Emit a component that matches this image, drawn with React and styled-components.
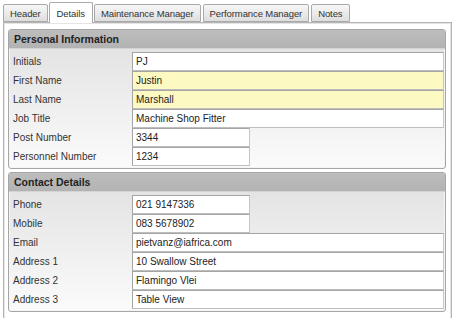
import styled, { createGlobalStyle } from "styled-components";

const GlobalStyle = createGlobalStyle`
  html, body {
    margin: 0;
    padding: 0;
    background: #ffffff;
  }
  body {
    font-family: "Liberation Sans", Arial, sans-serif;
    font-size: 10px;
    color: #222;
  }
`;

const TABS = ["Header", "Details", "Maintenance Manager", "Performance Manager", "Notes"];

const personal = [
  { label: "Initials", value: "PJ" },
  { label: "First Name", value: "Justin", required: true },
  { label: "Last Name", value: "Marshall", required: true },
  { label: "Job Title", value: "Machine Shop Fitter" },
  { label: "Post Number", value: "3344", short: true },
  { label: "Personnel Number", value: "1234", short: true },
];

const contact = [
  { label: "Phone", value: "021 9147336", short: true },
  { label: "Mobile", value: "083 5678902", short: true },
  { label: "Email", value: "pietvanz@iafrica.com" },
  { label: "Address 1", value: "10 Swallow Street" },
  { label: "Address 2", value: "Flamingo Vlei" },
  { label: "Address 3", value: "Table View" },
];

const Section = ({ title, rows }) => (
  <Group>
    <GroupHeader>{title}</GroupHeader>
    <GroupBody>
      {rows.map((r) => (
        <Row key={r.label}>
          <Label>{r.label}</Label>
          <Field $required={r.required} $short={r.short}>
            {r.value}
          </Field>
        </Row>
      ))}
    </GroupBody>
  </Group>
);

export default function App() {
  return (
    <>
      <GlobalStyle />
      <Screen>
        <TabBar>
          {TABS.map((t) => (
            <Tab key={t} $active={t === "Details"}>
              {t}
            </Tab>
          ))}
        </TabBar>
        <Panel>
          <Section title="Personal Information" rows={personal} />
          <Section title="Contact Details" rows={contact} />
        </Panel>
      </Screen>
    </>
  );
}

const Screen = styled.div`
  width: 454px;
  height: 318px;
  overflow: hidden;
  padding: 2px 0 0 3px;
  box-sizing: border-box;
`;

const TabBar = styled.div`
  display: flex;
  align-items: flex-end;
  gap: 2px;
  height: 20px;
  position: relative;
  z-index: 1;
`;

const Tab = styled.div`
  box-sizing: border-box;
  height: ${(p) => (p.$active ? "21px" : "18px")};
  padding: 0 ${(p) => (p.$active ? "7px" : "6px")};
  margin: ${(p) => (p.$active ? "0 -1px -1px" : "0")};
  display: flex;
  align-items: center;
  border: 1px solid #a9a9a9;
  border-bottom: ${(p) => (p.$active ? "none" : "1px solid #a9a9a9")};
  border-radius: 2px 2px 0 0;
  background: ${(p) =>
    p.$active ? "#ffffff" : "linear-gradient(to bottom, #f7f7f7, #dedede)"};
  color: #333;
  font-size: 9.5px;
  letter-spacing: -0.1px;
  white-space: nowrap;
`;

const Panel = styled.div`
  box-sizing: border-box;
  width: 449px;
  height: 300px;
  border: 1px solid #b5b5b5;
  box-shadow: inset 0 0 0 1px #e4e4e4, 2px 0 0 #ffffff, 3px 0 0 #c4c4c4;
  background: #ffffff;
  padding: 6px 5px 4px 4px;
  display: flex;
  flex-direction: column;
  gap: 3px;
`;

const Group = styled.div`
  border: 1px solid #a6a6a6;
  border-radius: 3px;
  background: linear-gradient(to bottom, #e0e0e0, #fbfbfb);
  box-shadow: inset 0 0 0 1px #f4f4f4;
  overflow: hidden;
`;

const GroupHeader = styled.div`
  height: 18px;
  line-height: 18px;
  padding-left: 5px;
  background: linear-gradient(to bottom, #bdbdbd, #b3b3b3);
  border-bottom: 1px solid #d4d4d4;
  font-weight: bold;
  font-size: 10.5px;
  color: #222;
`;

const GroupBody = styled.div`
  padding: 3px 1px 2px 4px;
`;

const Row = styled.div`
  display: grid;
  grid-template-columns: 119px 1fr;
  align-items: center;
  height: 19px;
`;

const Label = styled.div`
  color: #333;
  white-space: nowrap;
`;

const Field = styled.div`
  box-sizing: border-box;
  height: 19px;
  width: ${(p) => (p.$short ? "118px" : "100%")};
  line-height: 17px;
  padding-left: 3px;
  border: 1px solid #a5a5a5;
  border-right-color: #c6c6c6;
  border-bottom-color: #bdbdbd;
  background: ${(p) => (p.$required ? "#fdf9c3" : "#ffffff")};
  color: #222;
  white-space: nowrap;
`;
